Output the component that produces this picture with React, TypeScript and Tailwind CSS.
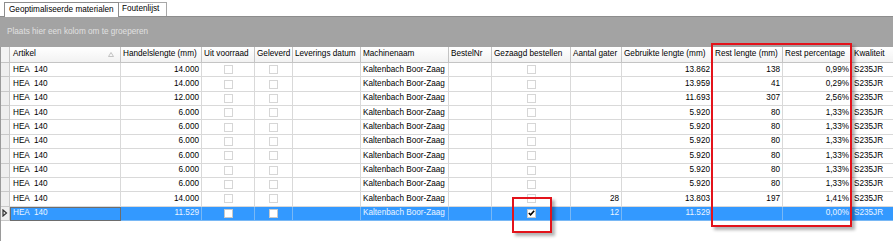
type Row = {
  len: string;
  aantal: string;
  used: string;
  rest: string;
  pct: string;
  selected?: boolean;
};

const rows: Row[] = [
  { len: "14.000", aantal: "", used: "13.862", rest: "138", pct: "0,99%" },
  { len: "14.000", aantal: "", used: "13.959", rest: "41", pct: "0,29%" },
  { len: "12.000", aantal: "", used: "11.693", rest: "307", pct: "2,56%" },
  { len: "6.000", aantal: "", used: "5.920", rest: "80", pct: "1,33%" },
  { len: "6.000", aantal: "", used: "5.920", rest: "80", pct: "1,33%" },
  { len: "6.000", aantal: "", used: "5.920", rest: "80", pct: "1,33%" },
  { len: "6.000", aantal: "", used: "5.920", rest: "80", pct: "1,33%" },
  { len: "6.000", aantal: "", used: "5.920", rest: "80", pct: "1,33%" },
  { len: "6.000", aantal: "", used: "5.920", rest: "80", pct: "1,33%" },
  { len: "14.000", aantal: "28", used: "13.803", rest: "197", pct: "1,41%" },
  { len: "11.529", aantal: "12", used: "11.529", rest: "", pct: "0,00%", selected: true },
];

const headers = [
  "Handelslengte (mm)",
  "Uit voorraad",
  "Geleverd",
  "Leverings datum",
  "Machinenaam",
  "BestelNr",
  "Gezaagd bestellen",
  "Aantal gater",
  "Gebruikte lengte (mm)",
  "Rest lengte (mm)",
  "Rest percentage",
  "Kwaliteit",
];

const gridCols =
  "grid grid-cols-[9px_111px_81px_53px_38px_68px_88px_43px_79px_51px_91px_70px_69px_42px]";

function Check({ sel, checked }: { sel?: boolean; checked?: boolean }) {
  return (
    <span
      className={
        "flex h-[9px] w-[9px] items-center justify-center border " +
        (sel ? "border-[#c8c8c8] bg-white" : "border-[#d6d6d6] bg-white")
      }
    >
      {checked && (
        <svg width="7" height="6" viewBox="0 0 7 6">
          <path d="M0.8 3 L2.6 4.8 L6.2 0.8" fill="none" stroke="#000" strokeWidth="1.6" />
        </svg>
      )}
    </span>
  );
}

function DataRow({ r }: { r: Row }) {
  const sel = r.selected;
  const cell =
    "flex h-[14.36px] items-center overflow-hidden whitespace-pre border-b border-r " +
    (sel ? "bg-[#3399ff] text-[#eaf4ff] border-[#79b8f5]" : "bg-white text-black border-[#d9d9d9]");
  const left = cell + " pl-[3px]";
  const num = cell + " justify-end pr-[2px]";
  const mid = cell + " justify-center";
  return (
    <div className={gridCols}>
      <div className="flex h-[14.36px] items-center border-b border-r border-[#c9c9c9] bg-[#efefef]">
        {sel && (
          <svg width="6" height="8" viewBox="0 0 6 8" className="ml-[1px]">
            <path d="M1 1 L4.5 4 L1 7 Z" fill="none" stroke="#333" strokeWidth="1.2" />
          </svg>
        )}
      </div>
      <div className={left + (sel ? " outline outline-1 -outline-offset-1 outline-[#6d6d6d]" : "")}>HEA  140</div>
      <div className={num}>{r.len}</div>
      <div className={mid}>
        <Check sel={sel} />
      </div>
      <div className={mid}>
        <Check sel={sel} />
      </div>
      <div className={cell} />
      <div className={cell + " pl-[2px]"}>Kaltenbach Boor-Zaag</div>
      <div className={cell} />
      <div className={mid}>
        <Check sel={sel} checked={sel} />
      </div>
      <div className={num}>{r.aantal}</div>
      <div className={num}>{r.used}</div>
      <div className={num}>{r.rest}</div>
      <div className={num}>{r.pct}</div>
      <div className={cell + " pl-[2px]"}>S235JR</div>
    </div>
  );
}

export default function App() {
  return (
    <div className="relative h-[241px] w-[893px] overflow-hidden bg-white font-['Liberation_Sans',Arial,sans-serif] text-[8.2px] text-black">
      {/* tabs */}
      <div className="flex h-[17px] items-end border-b border-[#8d8d8d] pl-[4px]">
        <div className="-mb-px flex h-[15px] w-[115px] items-center border border-b-0 border-[#8d8d8d] bg-white pl-[4px]">
          Geoptimaliseerde materialen
        </div>
        <div className="flex h-[14px] w-[48px] items-center border-r border-t border-[#a8a8a8] bg-white pl-[3px]">
          Foutenlijst
        </div>
      </div>

      {/* group panel */}
      <div className="flex h-[30px] items-center bg-[#a3a3a3] pl-[7px] text-[#e0e0e0]">
        Plaats hier een kolom om te groeperen
      </div>

      {/* header */}
      <div className={gridCols + " border-l border-[#9a9a9a]"}>
        <div className="h-[16px] border-b border-r border-[#c4c4c4] bg-[#f3f3f3]" />
        <div className="flex h-[16px] items-center justify-between border-b border-r border-[#c4c4c4] bg-gradient-to-b from-white to-[#f2f2f2] pl-[3px] pr-[6px]">
          <span>Artikel</span>
          <svg width="6" height="5" viewBox="0 0 6 5">
            <path d="M3 0.5 L5.5 4.5 L0.5 4.5 Z" fill="none" stroke="#b5b5b5" strokeWidth="0.8" />
          </svg>
        </div>
        {headers.map((h) => (
          <div
            key={h}
            className="flex h-[16px] items-center overflow-hidden whitespace-nowrap border-b border-r border-[#c4c4c4] bg-gradient-to-b from-white to-[#f2f2f2] pl-[2px]"
          >
            {h}
          </div>
        ))}
      </div>

      {/* rows */}
      <div className="border-l border-[#9a9a9a]">
        {rows.map((r, i) => (
          <DataRow key={i} r={r} />
        ))}
        <div className="h-[30px]" />
      </div>

      {/* annotation boxes */}
      <div className="pointer-events-none absolute left-[711px] top-[43px] h-[184px] w-[141px] border-2 border-[#e3131b] shadow-[3px_3px_3px_rgba(0,0,0,0.3)]" />
      <div className="pointer-events-none absolute left-[512px] top-[197px] h-[36px] w-[40px] border-2 border-[#e3131b] shadow-[3px_3px_3px_rgba(0,0,0,0.3)]" />
    </div>
  );
}
